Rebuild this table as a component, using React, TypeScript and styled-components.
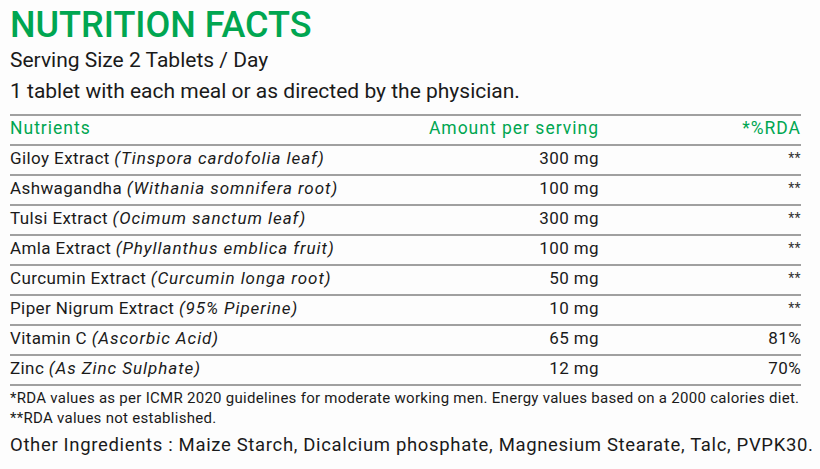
import React from "react";
import styled, { createGlobalStyle } from "styled-components";

const Global = createGlobalStyle`
  html, body { margin: 0; padding: 0; background: #fdfdfd; }
  body { font-family: Roboto, "Noto Sans", sans-serif; color: #1a1a1a; }
`;

const Page = styled.div`
  width: 820px;
  height: 469px;
  padding: 0 19px 0 10px;
  box-sizing: border-box;
  overflow: hidden;
`;

const Title = styled.h1`
  margin: 0;
  padding-top: 5px;
  font-size: 36px;
  line-height: 40px;
  font-weight: 500;
  color: #00a651;
`;

const Sub = styled.p`
  margin: 0;
  font-size: 21px;
  line-height: 31px;
  font-weight: 400;
  color: #1a1a1a;
  white-space: nowrap;
`;

const Table = styled.div`
  margin-top: 7px;
  border-top: 2px solid #a0a0a0;
  display: grid;
  grid-template-columns: 1fr 200px 202px;
`;

const Cell = styled.div<{ $align?: "left" | "right"; $head?: boolean }>`
  height: 25px;
  padding-bottom: 3px;
  line-height: 25px;
  border-bottom: 2px solid #a0a0a0;
  font-size: ${(p) => (p.$head ? "17.5px" : "17px")};
  letter-spacing: ${(p) => (p.$head ? "1px" : "0.4px")};
  text-align: ${(p) => p.$align ?? "left"};
  color: ${(p) => (p.$head ? "#00a651" : "#1a1a1a")};
  white-space: nowrap;
`;

const Latin = styled.i`
  letter-spacing: 0.95px;
`;

const Stars = styled.span`
  font-size: 14px;
  vertical-align: 3px;
  color: #333;
`;

const Notes = styled.div`
  margin-top: 2px;
`;

const Note = styled.p`
  margin: 0;
  font-size: 15px;
  line-height: 20px;
  letter-spacing: 0.28px;
  color: #1a1a1a;
  white-space: nowrap;
`;

const Other = styled.p`
  margin: 5px 0 0;
  font-size: 18.5px;
  line-height: 24px;
  letter-spacing: 0.66px;
  color: #1a1a1a;
  white-space: nowrap;
`;

type Row = { name: string; latin: string; amount: string; rda: string };

const rows: Row[] = [
  { name: "Giloy Extract", latin: "Tinspora cardofolia leaf", amount: "300 mg", rda: "**" },
  { name: "Ashwagandha", latin: "Withania somnifera root", amount: "100 mg", rda: "**" },
  { name: "Tulsi Extract", latin: "Ocimum sanctum leaf", amount: "300 mg", rda: "**" },
  { name: "Amla Extract", latin: "Phyllanthus emblica fruit", amount: "100 mg", rda: "**" },
  { name: "Curcumin Extract", latin: "Curcumin longa root", amount: "50 mg", rda: "**" },
  { name: "Piper Nigrum Extract", latin: "95% Piperine", amount: "10 mg", rda: "**" },
  { name: "Vitamin C", latin: "Ascorbic Acid", amount: "65 mg", rda: "81%" },
  { name: "Zinc", latin: "As Zinc Sulphate", amount: "12 mg", rda: "70%" },
];

export default function App() {
  return (
    <Page>
      <Global />
      <Title>NUTRITION FACTS</Title>
      <Sub>Serving Size 2 Tablets / Day</Sub>
      <Sub>1 tablet with each meal or as directed by the physician.</Sub>
      <Table>
        <Cell $head>Nutrients</Cell>
        <Cell $head $align="right">Amount per serving</Cell>
        <Cell $head $align="right">*%RDA</Cell>
        {rows.map((r) => (
          <React.Fragment key={r.name}>
            <Cell>
              {r.name} <Latin>({r.latin})</Latin>
            </Cell>
            <Cell $align="right">{r.amount}</Cell>
            <Cell $align="right">{r.rda === "**" ? <Stars>**</Stars> : r.rda}</Cell>
          </React.Fragment>
        ))}
      </Table>
      <Notes>
        <Note>*RDA values as per ICMR 2020 guidelines for moderate working men. Energy values based on a 2000 calories diet.</Note>
        <Note>**RDA values not established.</Note>
      </Notes>
      <Other>Other Ingredients : Maize Starch, Dicalcium phosphate, Magnesium Stearate, Talc, PVPK30.</Other>
    </Page>
  );
}
